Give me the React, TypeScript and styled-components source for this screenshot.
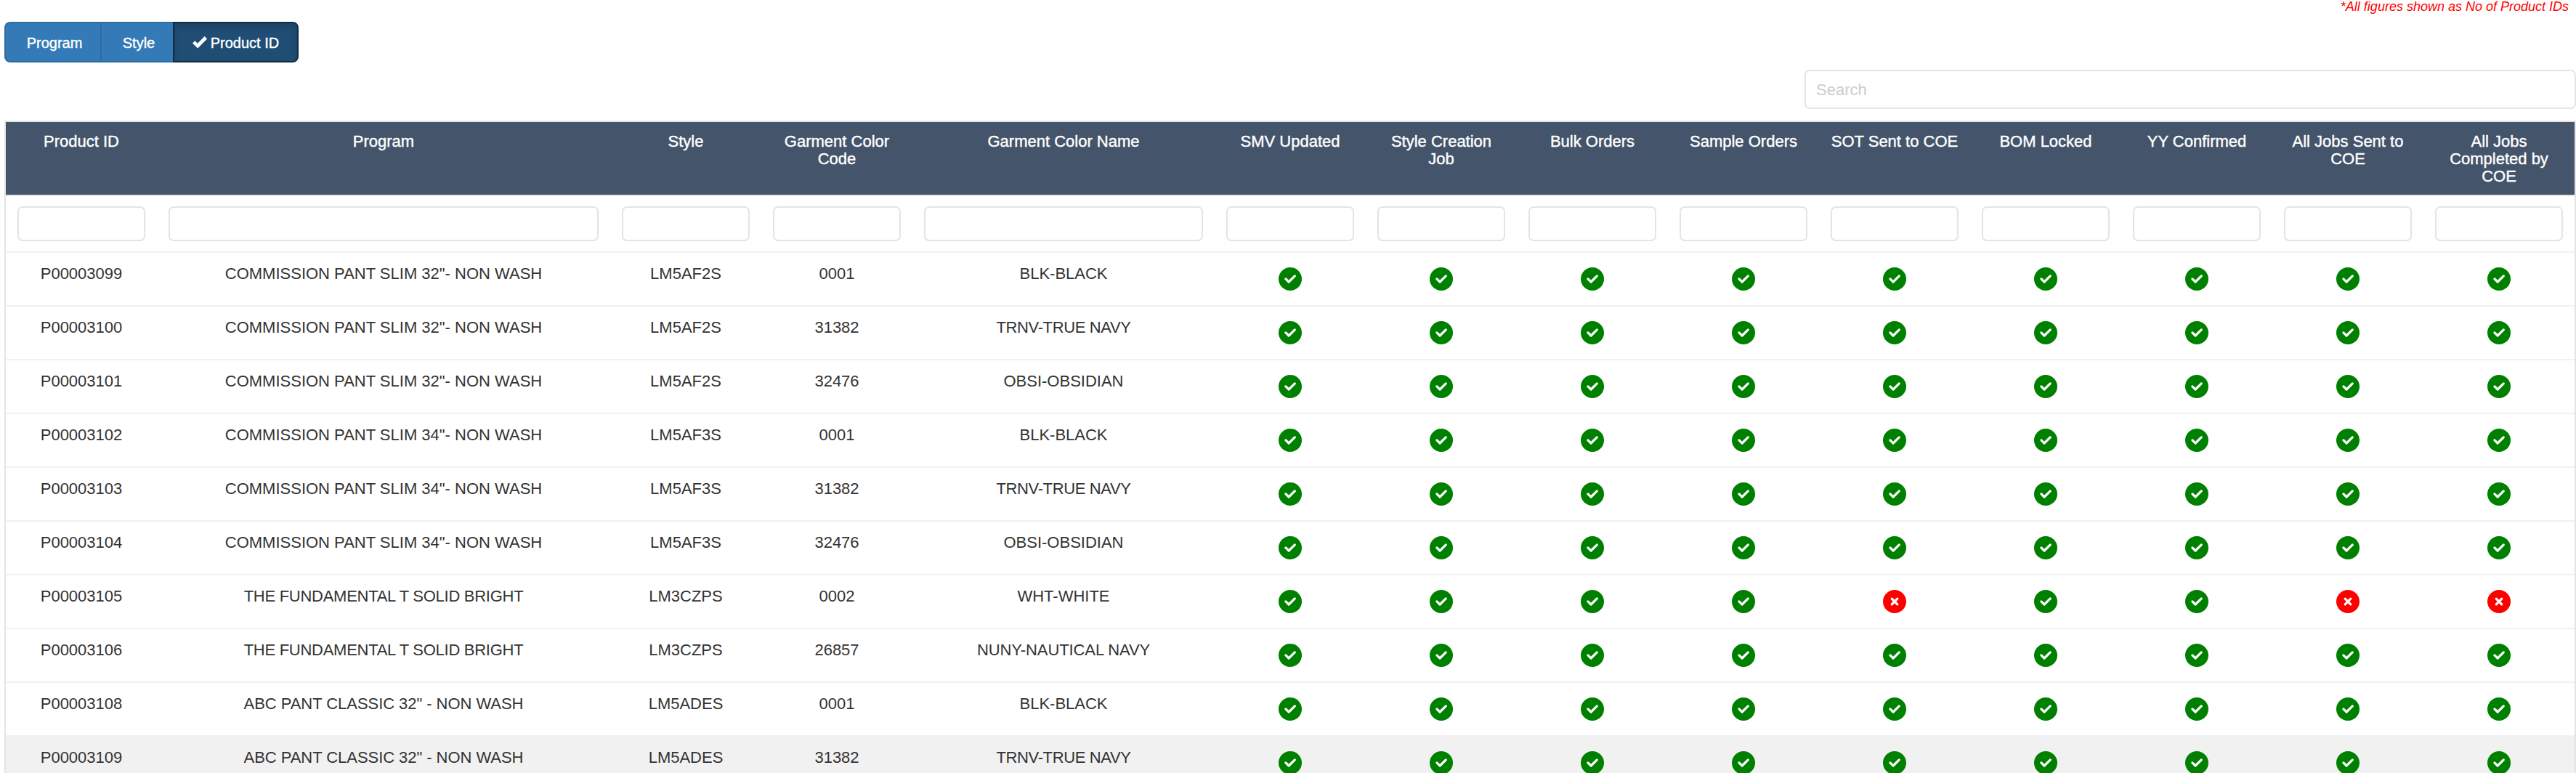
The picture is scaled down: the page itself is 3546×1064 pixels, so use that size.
import React from "react";
import styled, { createGlobalStyle } from "styled-components";

const GlobalStyle = createGlobalStyle`
  * { box-sizing: border-box; }
  html, body { margin: 0; padding: 0; }
  body {
    background: #fff;
    color: #333;
    font-family: "Liberation Sans", Helvetica, Arial, sans-serif;
    font-size: 22px;
    overflow: hidden;
  }
`;

const Page = styled.main`
  height: 1064px;
  padding-left: 6px;
  overflow: hidden;
`;

const Note = styled.p`
  margin: 0;
  height: 30px;
  padding-right: 10px;
  color: #f00;
  font-size: 18px;
  font-style: italic;
  line-height: 18px;
  text-align: right;
`;

const ButtonGroup = styled.div`
  display: flex;
  height: 56px;
`;

const GroupButton = styled.button<{ $width: number; $active?: boolean }>`
  display: flex;
  align-items: center;
  justify-content: center;
  gap: 5px;
  width: ${(p) => p.$width}px;
  padding: ${(p) => (p.$active ? "2px 0 0" : "2px 0 0 4px")};
  border: 2px solid ${(p) => (p.$active ? "#122b40" : "#2e6da4")};
  border-right-width: ${(p) => (p.$active ? 2 : 0)}px;
  background: ${(p) => (p.$active ? "#204d74" : "#337ab7")};
  box-shadow: ${(p) => (p.$active ? "inset 0 6px 10px rgba(0, 0, 0, 0.125)" : "none")};
  color: #fff;
  font: inherit;
  font-size: 20px;
  -webkit-text-stroke: 0.4px #fff;
  &:first-child { border-radius: 8px 0 0 8px; }
  &:last-child { border-radius: 0 8px 8px 0; }
`;

const SearchRow = styled.div`
  display: flex;
  justify-content: flex-end;
  padding: 10px 0 16px;
`;

const Input = styled.input`
  display: block;
  width: 100%;
  height: 48px;
  border: 2px solid #e4e4e4;
  border-radius: 7px;
  background: #fff;
  font: inherit;
  outline: none;
`;

const SearchInput = styled(Input)`
  width: 1062px;
  height: 54px;
  padding: 1px 14px 0;
  &::placeholder { color: #ccc; opacity: 1; }
`;

const Table = styled.div`
  border: 2px solid #e4e4e4;
  border-bottom: 0;
`;

const Row = styled.div<{ $highlight?: boolean }>`
  display: grid;
  grid-template-columns: 1fr 3fr 1fr 1fr 2fr repeat(9, 1fr);
  height: 74px;
  border-top: 2px solid #f1f1f1;
  background: ${(p) => (p.$highlight ? "#f1f1f1" : "#fff")};
`;

const HeaderRow = styled(Row)`
  height: 102px;
  border-top: 0;
  border-bottom: 2px solid #e4e4e4;
  background: #44546a;
  color: #fff;
`;

const FilterRow = styled(Row)`
  height: 76px;
  border-top: 0;
`;

const HeaderCell = styled.div`
  padding: 15px 16px 0;
  line-height: 24px;
  text-align: center;
  -webkit-text-stroke: 0.4px #fff;
`;

const FilterCell = styled.div`
  padding: 14px 16px;
`;

const Cell = styled.div<{ $tracking?: number }>`
  padding: 17px 16px 0;
  letter-spacing: ${(p) => p.$tracking ?? 0}px;
  line-height: 24px;
  text-align: center;
  white-space: nowrap;
`;

const StatusCell = styled.div`
  display: flex;
  justify-content: center;
  padding-top: 20px;
`;

const StatusSvg = styled.svg`
  display: block;
  width: 32px;
  height: 32px;
`;

const TickSvg = styled.svg`
  width: 20px;
  height: 17px;
  margin-top: -2px;
`;

function Status({ ok }: { ok: boolean }) {
  return (
    <StatusSvg viewBox="0 0 32 32">
      <circle cx="16" cy="16" r="16" fill={ok ? "#008000" : "#f00"} />
      <path
        d={ok ? "M9.9 15.9L14.1 20L22.3 11.9" : "M12.2 12.2L19.8 19.8M19.8 12.2L12.2 19.8"}
        fill="none"
        stroke="#fff"
        strokeWidth="3.2"
        strokeLinecap="round"
        strokeLinejoin="round"
      />
    </StatusSvg>
  );
}

const HEADERS = [
  "Product ID",
  "Program",
  "Style",
  "Garment Color Code",
  "Garment Color Name",
  "SMV Updated",
  "Style Creation Job",
  "Bulk Orders",
  "Sample Orders",
  "SOT Sent to COE",
  "BOM Locked",
  "YY Confirmed",
  "All Jobs Sent to COE",
  "All Jobs Completed by COE",
];

const SLIM32 = 'COMMISSION PANT SLIM 32"- NON WASH';
const SLIM34 = 'COMMISSION PANT SLIM 34"- NON WASH';
const TEE = "THE FUNDAMENTAL T SOLID BRIGHT";
const CLASSIC = 'ABC PANT CLASSIC 32" - NON WASH';
const NAVY = "TRNV-TRUE NAVY";
const NAUTICAL = "NUNY-NAUTICAL NAVY";
const DONE = "111111111";

const TRACKING: Record<string, number> = {
  [TEE]: -0.27,
  [NAVY]: -0.38,
  [NAUTICAL]: -0.1,
  [CLASSIC]: -0.05,
};

interface Product {
  fields: string[];
  status: string;
  highlight?: boolean;
}

const PRODUCTS: Product[] = [
  { fields: ["P00003099", SLIM32, "LM5AF2S", "0001", "BLK-BLACK"], status: DONE },
  { fields: ["P00003100", SLIM32, "LM5AF2S", "31382", NAVY], status: DONE },
  { fields: ["P00003101", SLIM32, "LM5AF2S", "32476", "OBSI-OBSIDIAN"], status: DONE },
  { fields: ["P00003102", SLIM34, "LM5AF3S", "0001", "BLK-BLACK"], status: DONE },
  { fields: ["P00003103", SLIM34, "LM5AF3S", "31382", NAVY], status: DONE },
  { fields: ["P00003104", SLIM34, "LM5AF3S", "32476", "OBSI-OBSIDIAN"], status: DONE },
  { fields: ["P00003105", TEE, "LM3CZPS", "0002", "WHT-WHITE"], status: "111101100" },
  { fields: ["P00003106", TEE, "LM3CZPS", "26857", NAUTICAL], status: DONE },
  { fields: ["P00003108", CLASSIC, "LM5ADES", "0001", "BLK-BLACK"], status: DONE },
  { fields: ["P00003109", CLASSIC, "LM5ADES", "31382", NAVY], status: DONE, highlight: true },
];

export default function App() {
  return (
    <>
      <GlobalStyle />
      <Page>
        <Note>*All figures shown as No of Product IDs</Note>
        <ButtonGroup>
          <GroupButton $width={132}>Program</GroupButton>
          <GroupButton $width={100}>Style</GroupButton>
          <GroupButton $width={173} $active>
            <TickSvg viewBox="0 0 20 17">
              <path d="M0 9.6L3.3 6.2L7 9.8L16.6 0L20 3.4L7.2 16.6Z" fill="#fff" />
            </TickSvg>
            Product ID
          </GroupButton>
        </ButtonGroup>
        <SearchRow>
          <SearchInput placeholder="Search" />
        </SearchRow>
        <Table>
          <HeaderRow>
            {HEADERS.map((h) => (
              <HeaderCell key={h}>{h}</HeaderCell>
            ))}
          </HeaderRow>
          <FilterRow>
            {HEADERS.map((h) => (
              <FilterCell key={h}>
                <Input />
              </FilterCell>
            ))}
          </FilterRow>
          {PRODUCTS.map((p) => (
            <Row key={p.fields[0]} $highlight={p.highlight}>
              {p.fields.map((f, i) => (
                <Cell key={i} $tracking={TRACKING[f]}>
                  {f}
                </Cell>
              ))}
              {[...p.status].map((s, i) => (
                <StatusCell key={i}>
                  <Status ok={s === "1"} />
                </StatusCell>
              ))}
            </Row>
          ))}
        </Table>
      </Page>
    </>
  );
}
